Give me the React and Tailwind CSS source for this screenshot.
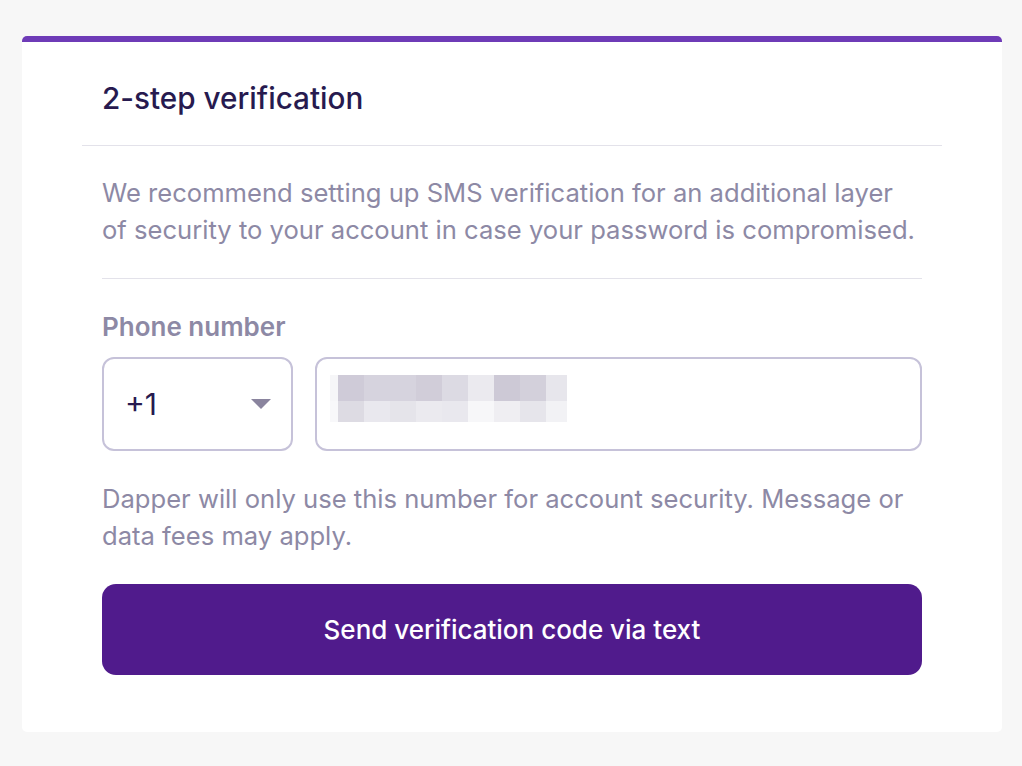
import React from "react";

const topRow = ["#cfcbd8", "#d6d3de", "#d6d3de", "#d1cdd9", "#dcdae3", "#ebeaef", "#cdc9d6", "#d3d0db", "#e7e6ec"];
const botRow = ["#dddbe3", "#e9e8ee", "#e5e4ea", "#ebeaef", "#e9e8ee", "#f7f7f9", "#efeef2", "#e6e5eb", "#f2f2f5"];

function Pixelated() {
  return (
    <svg width="237" height="47" viewBox="0 0 237 47" className="block">
      <rect x="0" y="0" width="8" height="26" fill="#f6f6f8" />
      <rect x="0" y="26" width="8" height="21" fill="#f8f8fa" />
      {topRow.map((c, i) => (
        <rect key={"t" + i} x={8 + i * 26} y="0" width={i === 8 ? 21 : 26} height="26" fill={c} />
      ))}
      {botRow.map((c, i) => (
        <rect key={"b" + i} x={8 + i * 26} y="26" width={i === 8 ? 21 : 26} height="21" fill={c} />
      ))}
    </svg>
  );
}

export default function App() {
  return (
    <div
      className="min-h-[766px] bg-[#f7f7f7] pt-[36px] pl-[22px] pr-[20px]"
      style={{ fontFamily: "Inter, Lato, sans-serif" }}
    >
      <div className="bg-white rounded-[5px] border-t-[6px] border-[#6e3bb7] px-[60px] pb-[57px]">
        <div className="px-5 pt-[37px] pb-[28px] border-b border-[#e3e2ea]">
          <h1 className="text-[29.7px] leading-[38px] font-medium text-[#271a4f]">2-step verification</h1>
        </div>
        <div className="px-5">
          <p className="mt-[28px] text-[25.6px] leading-[37px] text-[#8d89a5]">
            We recommend setting up SMS verification for an additional layer of security to your account in case
            your password is compromised.
          </p>
          <div className="mt-[30px] h-px bg-[#e3e2ea]" />
          <div className="mt-[32px] text-[26px] leading-[32px] font-semibold text-[#8d89a5]">Phone number</div>
          <div className="mt-[14px] flex gap-[22px]">
            <div className="w-[191px] h-[94px] rounded-[12px] border-2 border-[#c6c2d9] flex items-center justify-between pl-[21px] pr-[20px]">
              <span className="text-[30px] text-[#271a4f]">+1</span>
              <svg width="20" height="10" viewBox="0 0 20 10">
                <path d="M0 0 L20 0 L10 10 Z" fill="#8a849e" />
              </svg>
            </div>
            <div className="flex-1 h-[94px] rounded-[12px] border-2 border-[#c6c2d9] flex items-start pl-[13px] pt-[16px]">
              <Pixelated />
            </div>
          </div>
          <p className="mt-[29px] text-[25.6px] leading-[37px] text-[#8d89a5]">
            Dapper will only use this number for account security. Message or data fees may apply.
          </p>
          <button className="mt-[30px] w-full h-[91px] rounded-[14px] bg-[#501b8c] text-white text-[26px] font-medium">
            Send verification code via text
          </button>
        </div>
      </div>
    </div>
  );
}
